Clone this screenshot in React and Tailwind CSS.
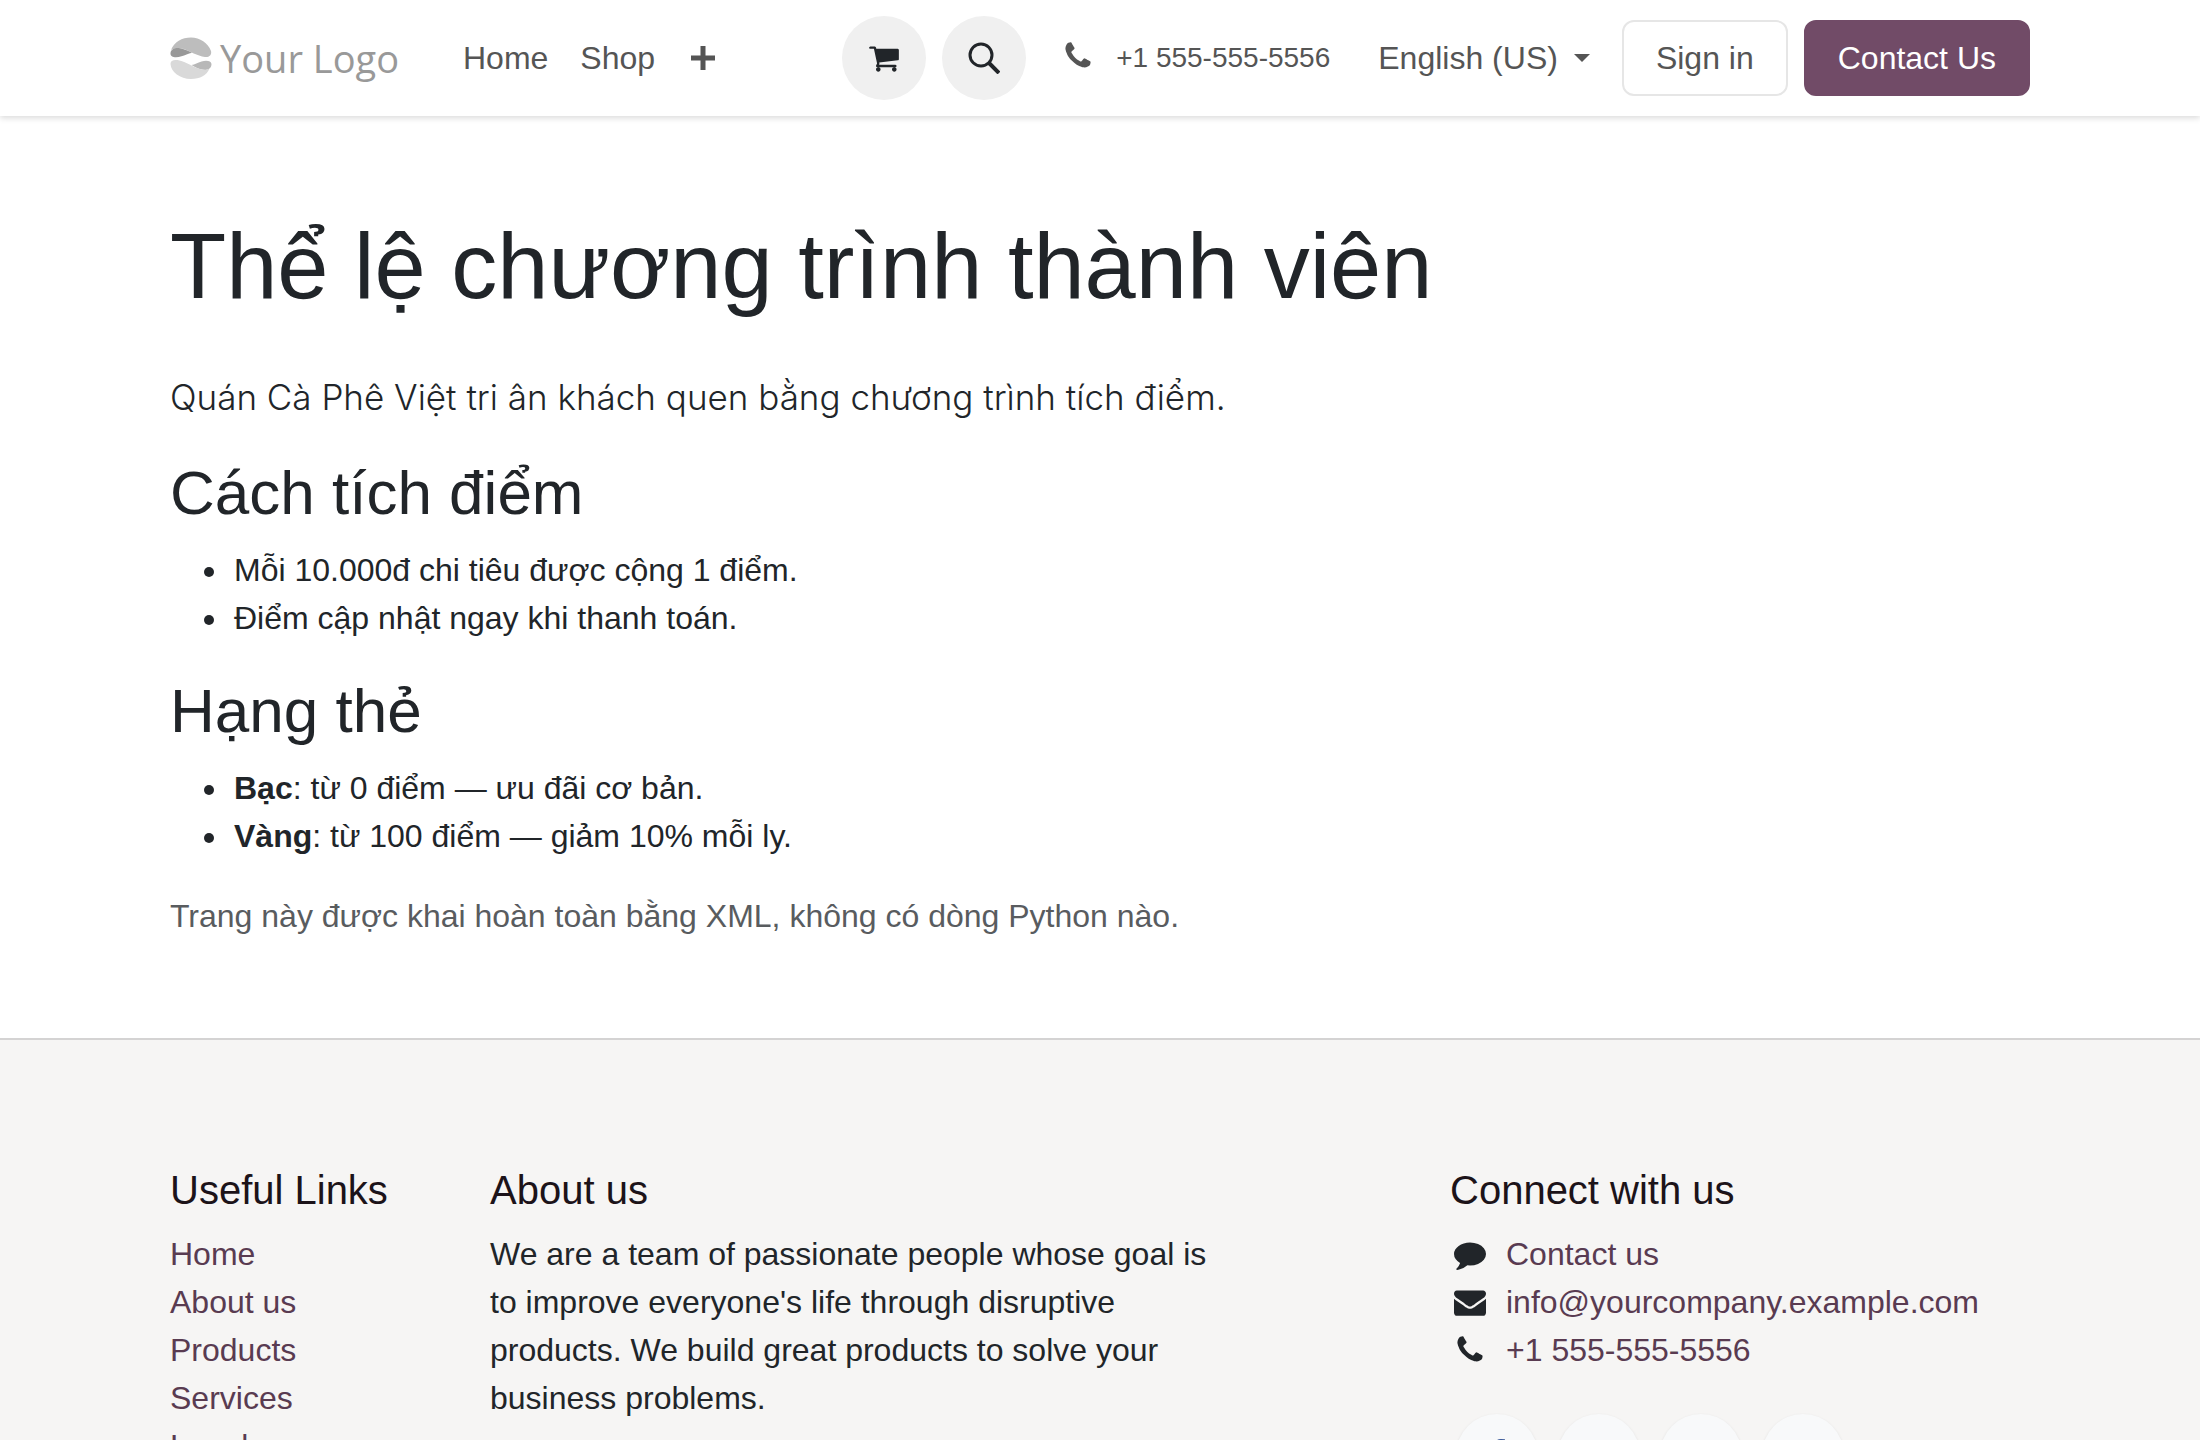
import React from 'react';

// Font Awesome 4 glyphs, drawn on the 1792-unit grid
const glyphs = {
    cart: 'M704 1536q0 52-38 90t-90 38-90-38-38-90 38-90 90-38 90 38 38 90zm896 0q0 52-38 90t-90 38-90-38-38-90 38-90 90-38 90 38 38 90zm128-1088v512q0 24-16.500 42.500t-40.500 21.500l-1044 122q13 60 13 70 0 16-24 64h920q26 0 45 19t19 45-19 45-45 19h-1024q-26 0-45-19t-19-45q0-11 8-31.500t16-36 21.500-40 15.500-29.500l-177-823h-204q-26 0-45-19t-19-45 19-45 45-19h256q16 0 28.500 6.500t19.500 15.500 13 24.500 8 26 5.500 29.500 4.500 26h1201q26 0 45 19t19 45z',
    phone: 'M1600 1240q0 27-10 70.500t-21 68.500q-21 50-122 106-94 51-186 51-27 0-53-3.500t-57.500-12.500-47-14.500-55.500-20.500-49-18q-98-35-175-83-127-79-264-216t-216-264q-48-77-83-175-3-9-18-49t-20.500-55.500-14.500-47-12.500-57.500-3.500-53q0-92 51-186 56-101 106-122 25-11 68.500-21t70.500-10q14 0 21 3 18 6 53 76 11 19 30 54t35 63.500 31 53.500q3 4 17.500 25t21.500 35.500 7 28.500q0 20-28.500 50t-62 55-62 53-28.500 46q0 9 5 22.500t8.500 20.500 14 24 11.500 19q76 137 174 235t235 174q2 1 19 11.500t24 14 20.500 8.500 22.500 5q18 0 46-28.500t53-62 55-62 50-28.500q14 0 28.500 7t35.500 21.500 25 17.500q25 15 53.500 31t63.500 35 54 30q70 35 76 53 3 7 3 21z',
    comment: 'M1792 896q0 174-120 321.500t-326 233-450 85.500q-70 0-145-8-198 175-460 242-49 14-114 22-17 2-30.500-9t-17.500-29v-1q-3-4-.5-12t2-10 4.500-9.500l6-9 7-8.500 8-9q7-8 31-34.500t34.500-38 31-39.500 32.500-51 27-59 26-76q-157-89-247.500-220t-90.500-281q0-130 71-248.500t191-204.500 286-136.500 348-50.500q244 0 450 85.500t326 233 120 321.500z',
    envelope: 'M1792 710v794q0 66-47 113t-113 47h-1472q-66 0-113-47t-47-113v-794q44 49 101 87 362 246 497 345 57 42 92.500 65.500t94.500 48 110 24.500h2q51 0 110-24.500t94.500-48 92.500-65.500q170-123 498-345 57-39 100-87zm0-294q0 79-49 151t-122 123q-376 261-468 325-10 7-42.500 30.500t-54 38-52 32.500-57.500 27-50 9h-2q-23 0-50-9t-57.500-27-52-32.500-54-38-42.500-30.500q-91-64-262-182.500t-205-142.500q-62-42-117-115.500t-55-136.500q0-78 41.500-130t118.500-52h1472q65 0 112.500 47t47.500 113z',
    facebook: 'M1343 12v264h-157q-86 0-116 36t-30 108v189h293l-39 296h-254v759h-306v-759h-255v-296h255v-218q0-186 104-288.500t277-102.500q147 0 228 12z',
};

const Glyph = ({ name, className }) => (
    <svg viewBox="0 0 1792 1792" fill="currentColor" className={className} aria-hidden="true">
        <path d={glyphs[name]} />
    </svg>
);

const Logo = () => (
    <a href="#" aria-label="Your Logo" className="flex items-center gap-2 text-[#999999]">
        <svg viewBox="0 0 42 42" className="h-[42px] w-[42px]" aria-hidden="true">
            <path d="M1 13C4 5 12 .5 21 .5S38 6 41 14c1 4-2 6.500-6 6C27 19 20 14 14 12 9 10.500 4 11 1 13z" fill="#bdbdbd" />
            <path d="M.5 16C1 12 5 10.500 10 11.200c4 .6 8 2.500 12 4.500-4 1-7 2.500-10.500 3.600C6 21 0 20.500.5 16z" fill="#999" />
            <path d="M41.500 27C41 24 37 23 31.500 24.500c-4 1-6.500 3-10 3.500 4 2.500 8 4.300 12 4.800 5 .6 8-1.800 8-5.800z" fill="#b8b8b8" />
            <path d="M.5 27c0-4 4-4.500 9-3.500 7 1.500 14 7 22 9 3 .7 6 .3 8-1C37 38 30 42 21 42 10 42 1 35 .5 27z" fill="#d9d9d9" />
        </svg>
        <span className="font-['Open_Sans',sans-serif] text-[38px] leading-[48px] font-medium">Your Logo</span>
    </a>
);

const usefulLinks = ['Home', 'About us', 'Products', 'Services', 'Legal', 'Privacy Policy'];

const contacts = [
    { icon: 'comment', text: 'Contact us' },
    { icon: 'envelope', text: 'info@yourcompany.example.com' },
    { icon: 'phone', text: '+1 555-555-5556' },
];

const Header = () => (
    <header className="relative bg-white shadow-[0_2px_6px_rgba(0,0,0,0.15)]">
        <nav className="mx-auto flex h-[116px] max-w-[1920px] items-center px-[30px] text-[#555555]">
            <Logo />
            <div className="ml-16 flex items-center gap-8">
                <a href="#">Home</a>
                <a href="#">Shop</a>
                <button type="button" aria-label="More" className="ml-1">
                    <svg viewBox="0 0 24 24" className="h-6 w-6" fill="currentColor" aria-hidden="true">
                        <path d="M9.500 0h5v9.500H24v5h-9.500V24h-5v-9.500H0v-5h9.500z" />
                    </svg>
                </button>
            </div>
            <div className="ml-auto flex items-center gap-4">
                <a href="#" aria-label="Cart" className="flex h-[84px] w-[84px] items-center justify-center rounded-full bg-[#f0f0f0] text-[#212529]">
                    <Glyph name="cart" className="h-8 w-8" />
                </a>
                <button type="button" aria-label="Search" className="flex h-[84px] w-[84px] items-center justify-center rounded-full bg-[#f0f0f0] text-[#212529]">
                    <svg viewBox="0 0 32 32" className="h-8 w-8" fill="none" stroke="currentColor" aria-hidden="true">
                        <circle cx="13" cy="13" r="11" strokeWidth="3" />
                        <path d="M21 21l10 10" strokeWidth="4" />
                    </svg>
                </button>
                <a href="#" className="mx-5 flex items-center gap-[22px] text-[28px]">
                    <Glyph name="phone" className="mb-1 h-8 w-8" />
                    +1 555-555-5556
                </a>
                <button type="button" className="mr-4 ml-3 flex items-center gap-4">
                    English (US)
                    <span className="border-x-8 border-t-8 border-x-transparent border-t-[#555555]" />
                </button>
                <a href="#" className="rounded-xl border-2 border-[#e6e6e6] px-8 py-3">Sign in</a>
                <a href="#" className="rounded-xl border-2 border-[#714b67] bg-[#714b67] px-8 py-3 text-white">Contact Us</a>
            </div>
        </nav>
    </header>
);

const Content = () => (
    <main className="mx-auto w-full max-w-[1920px] px-[30px] pt-[94px] pb-[98px]">
        <h1 className="text-[92px] leading-[112px]">Thể lệ chương trình thành viên</h1>
        <p className="mt-12 mb-8 font-['Inter',sans-serif] text-[35px] leading-[54px] font-light">
            Quán Cà Phê Việt tri ân khách quen bằng chương trình tích điểm.
        </p>
        <h2 className="mb-4 text-[62px] leading-[74px]">Cách tích điểm</h2>
        <ul className="mb-8 list-disc pl-[60px]">
            <li className="pl-1">Mỗi 10.000đ chi tiêu được cộng 1 điểm.</li>
            <li className="pl-1">Điểm cập nhật ngay khi thanh toán.</li>
        </ul>
        <h2 className="mb-4 text-[62px] leading-[74px]">Hạng thẻ</h2>
        <ul className="mb-8 list-disc pl-[60px]">
            <li className="pl-1"><strong>Bạc</strong>: từ 0 điểm — ưu đãi cơ bản.</li>
            <li className="pl-1"><strong>Vàng</strong>: từ 100 điểm — giảm 10% mỗi ly.</li>
        </ul>
        <p className="text-[#595c5f]">Trang này được khai hoàn toàn bằng XML, không có dòng Python nào.</p>
    </main>
);

const Footer = () => (
    <footer className="flex-1 border-t-2 border-[#d4d3d3] bg-[#f6f5f4]">
        <div className="mx-auto grid max-w-[1920px] grid-cols-12 pt-[126px]">
            <div className="col-span-2 px-[30px]">
                <h5 className="mb-4 text-[40px] leading-[48px] whitespace-nowrap text-[#1c1319]">Useful Links</h5>
                <ul className="text-[#593b51]">
                    {usefulLinks.map((link) => (
                        <li key={link}><a href="#">{link}</a></li>
                    ))}
                </ul>
            </div>
            <div className="col-span-5 px-[30px]">
                <h5 className="mb-4 text-[40px] leading-[48px] text-[#1c1319]">About us</h5>
                <p>
                    We are a team of passionate people whose goal is to improve everyone's life through
                    disruptive products. We build great products to solve your business problems.
                </p>
            </div>
            <div className="col-span-4 col-start-9 px-[30px]">
                <h5 className="mb-4 text-[40px] leading-[48px] text-[#1c1319]">Connect with us</h5>
                <ul>
                    {contacts.map(({ icon, text }) => (
                        <li key={text} className="flex items-center gap-4">
                            <span className="flex w-10 justify-center"><Glyph name={icon} className="h-8 w-8" /></span>
                            <a href="#" className="text-[#593b51]">{text}</a>
                        </li>
                    ))}
                </ul>
                <div className="mt-10 ml-1.5 flex gap-5">
                    <a href="#" aria-label="Facebook" className="flex h-[82px] w-[82px] items-center justify-center rounded-full bg-[#f8f9fa] text-[#3b5998] shadow-sm">
                        <Glyph name="facebook" className="h-8 w-8" />
                    </a>
                    {['Twitter', 'LinkedIn', 'Instagram'].map((name) => (
                        <a key={name} href="#" aria-label={name} className="h-[82px] w-[82px] rounded-full bg-[#f8f9fa] shadow-sm" />
                    ))}
                </div>
            </div>
        </div>
    </footer>
);

const App = () => (
    <div className="flex h-screen flex-col overflow-hidden bg-white font-['Liberation_Sans',Arial,sans-serif] text-[32px] leading-[48px] text-[#212529]">
        <Header />
        <Content />
        <Footer />
    </div>
);

export default App;
